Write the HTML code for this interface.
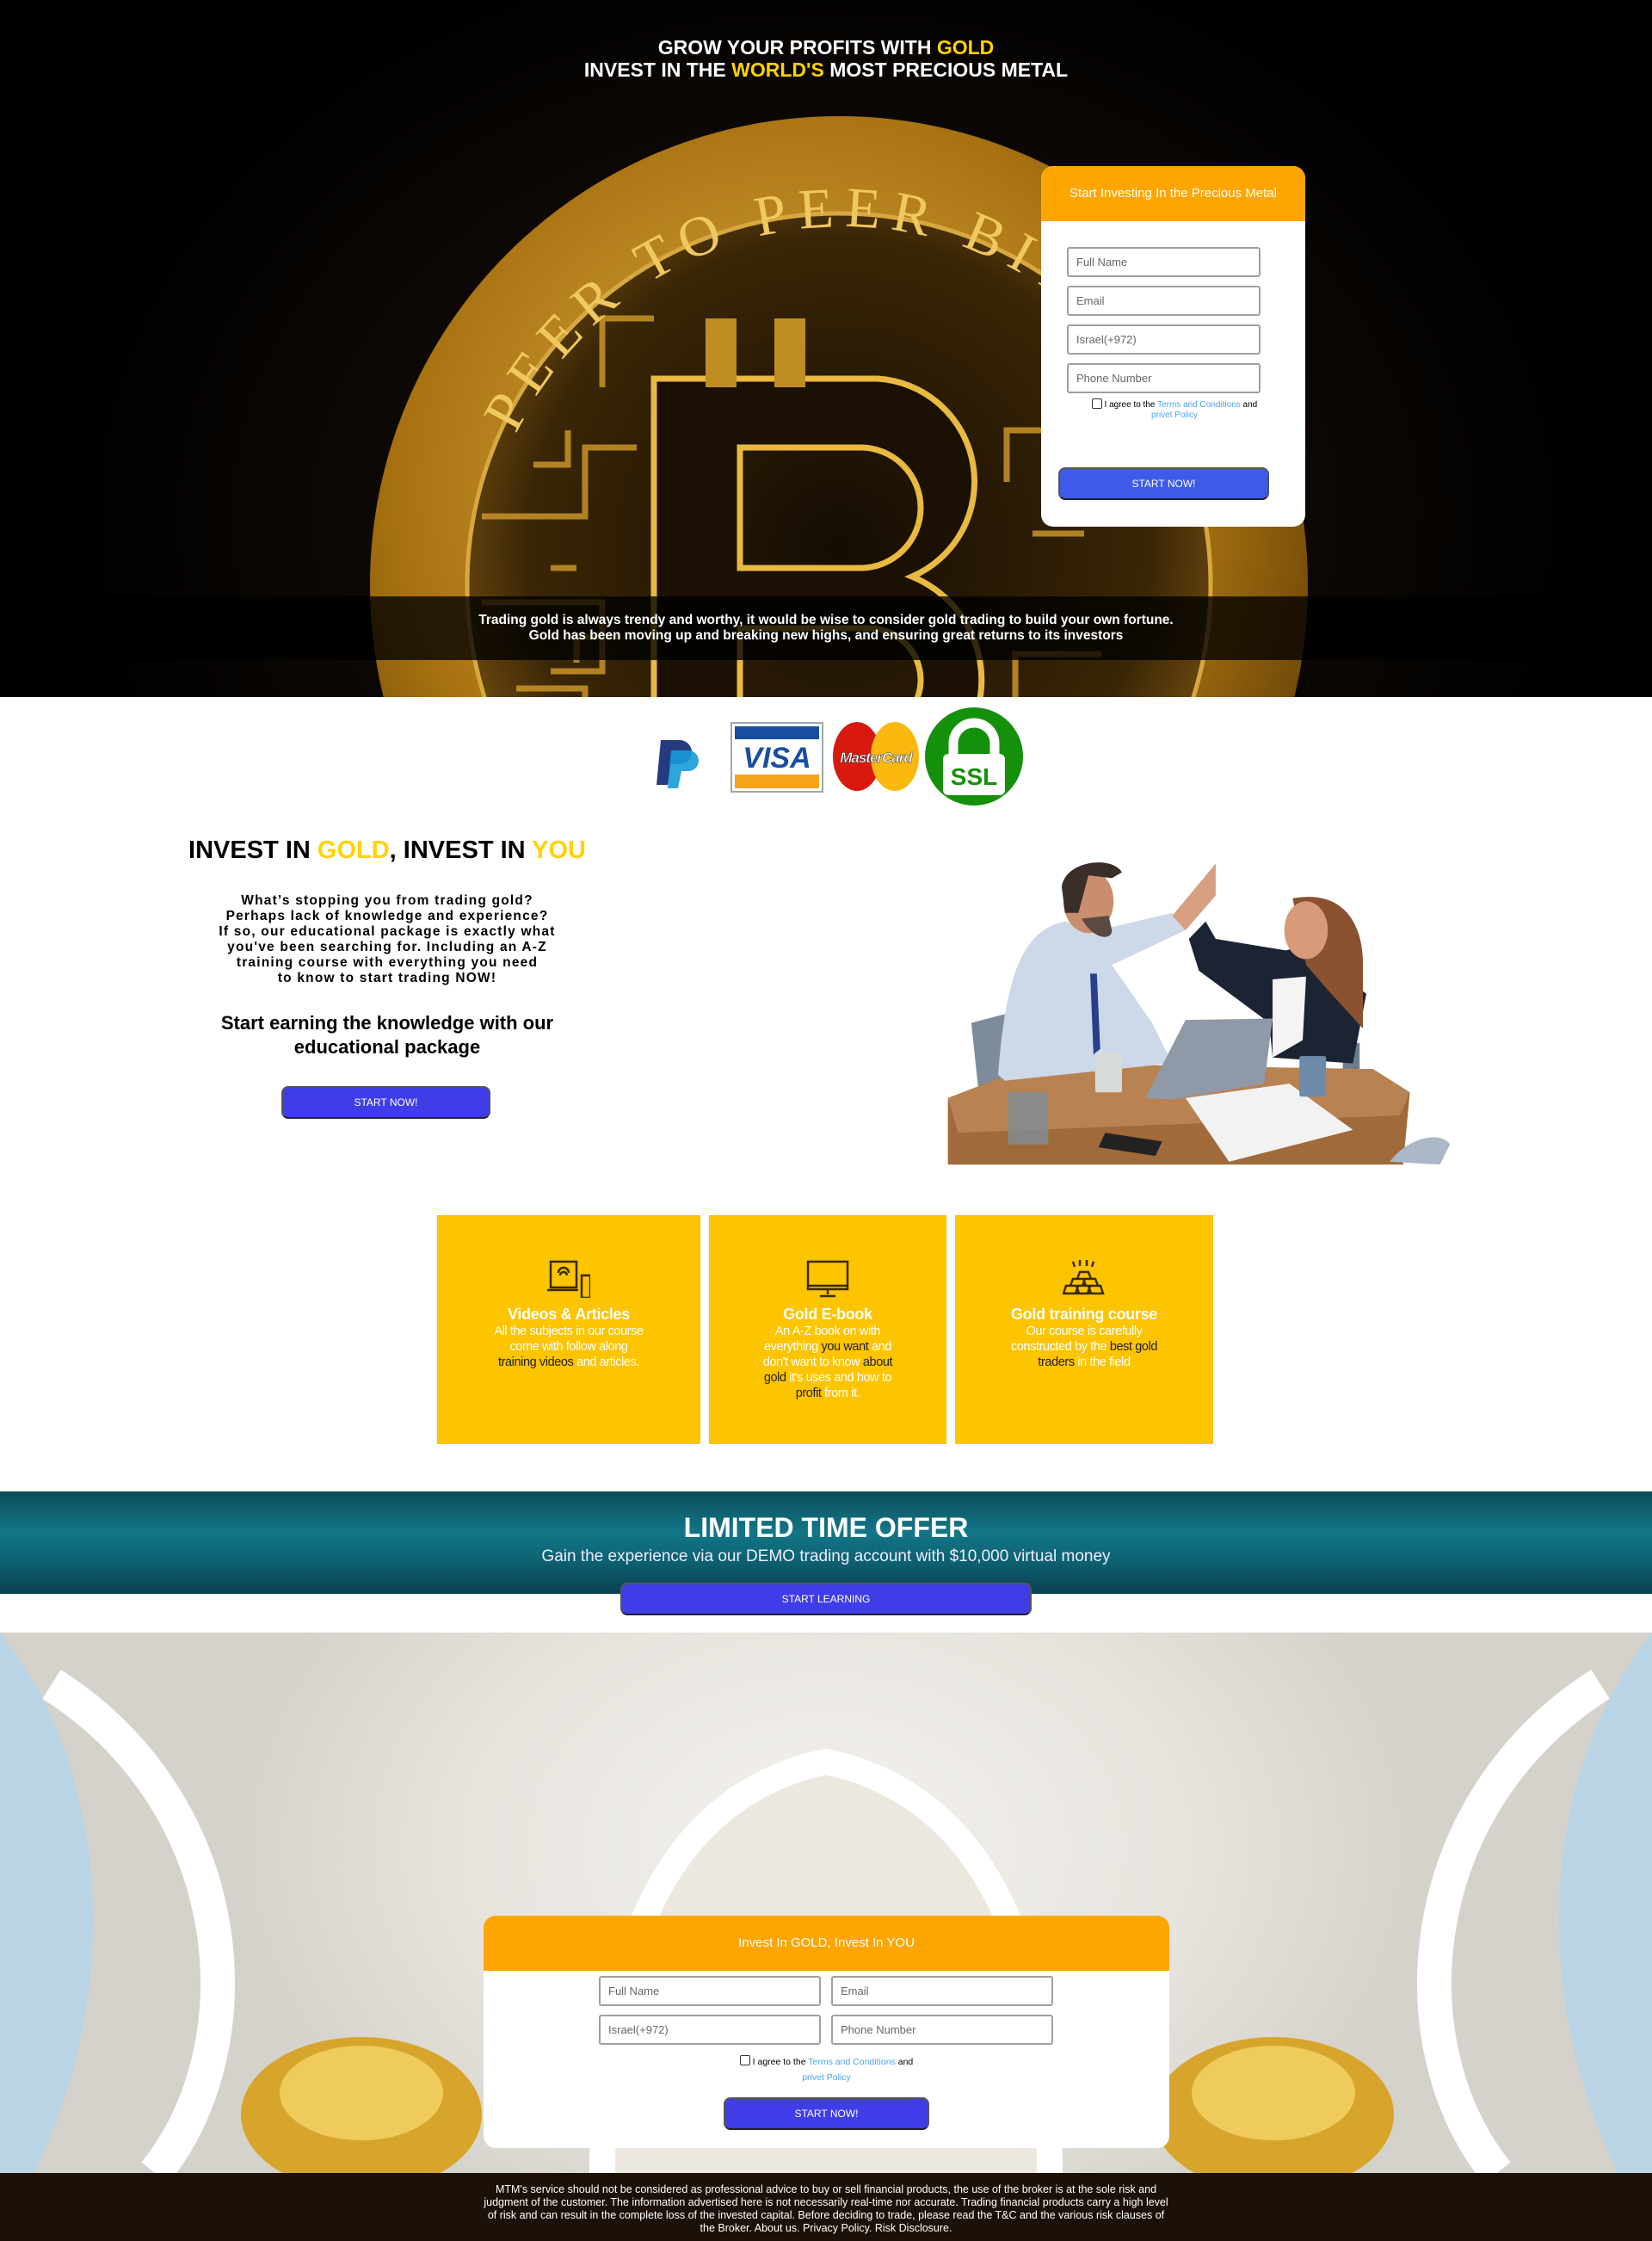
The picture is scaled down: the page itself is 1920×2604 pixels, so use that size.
<!DOCTYPE html>
<html><head><meta charset="utf-8"><style>
*{margin:0;padding:0;box-sizing:border-box}
body{width:1920px;height:2604px;position:relative;background:#fff;font-family:"Liberation Sans",Arial,sans-serif;overflow:hidden}
.a{position:absolute}
.hero{left:0;top:0;width:1920px;height:810px;background:radial-gradient(ellipse 900px 700px at 960px 600px,#2a1a05 0%,#0d0804 60%,#000 100%);overflow:hidden}
.title{left:0;top:42px;width:1920px;text-align:center;color:#fff;font-weight:bold;font-size:23px;line-height:26px}
.y{color:#ffd200}
.card{background:#fff;border-radius:14px;overflow:hidden}
.card .hd{background:#ffa500;color:#fff;text-align:center}
.inp{position:absolute;border:2px solid #a0a0a0;border-radius:3px;background:#fff;color:#666;font-size:13px;padding-left:9px;display:flex;align-items:center}
.btn{position:absolute;background:#3f3de8;border:2px solid #555;border-bottom-color:#222;border-radius:8px;color:#fff;font-size:12px;display:flex;align-items:center;justify-content:center}
.lnk{color:#4aa3ff}
.box{position:absolute;top:1412px;height:266px;background:#fdc400;text-align:center;color:#fff}
.box h3{font-size:18px;margin-top:4px;letter-spacing:-0.3px}
.box p{font-size:14.5px;line-height:18px;padding:0 6px;letter-spacing:-0.4px}
.box svg{margin-top:52px}
.k{color:#222}
</style></head><body>

<div class="a hero">
<svg class="a" style="left:0;top:0" width="1920" height="810">
<defs>
<radialGradient id="cg" cx="0.45" cy="0.4" r="0.7"><stop offset="0" stop-color="#e0b04a"/><stop offset="0.6" stop-color="#a87210"/><stop offset="1" stop-color="#4a2e04"/></radialGradient>
<radialGradient id="ci" cx="0.5" cy="0.45" r="0.6"><stop offset="0" stop-color="#140c03"/><stop offset="0.7" stop-color="#3a2606"/><stop offset="1" stop-color="#8a5e14"/></radialGradient>
<path id="arc" d="M560 680 A420 420 0 0 1 1290 400"/>
</defs>
<circle cx="975" cy="680" r="545" fill="url(#cg)"/>
<circle cx="975" cy="680" r="430" fill="url(#ci)"/>
<circle cx="975" cy="680" r="432" fill="none" stroke="#d8a840" stroke-width="5"/>
<g fill="none" stroke="#c99428" stroke-width="7" opacity=".85">
<path d="M560 600 h120 v-80 h60 M560 700 h140 v80 h-60 M600 800 h80 v60 M700 450 v-80 h60"/>
<path d="M1250 500 h-80 v60 M1260 620 h-60 M1280 760 h-100 v80"/>
<path d="M620 540 h40 v-40 M640 660 h30 M720 740 h-50 v30"/>
</g>
<path d="M760 440 h260 a120 120 0 0 1 40 230 a130 130 0 0 1 -40 250 h-260 z M860 520 v140 h140 a70 70 0 0 0 0 -140 z M860 730 v120 h150 a60 60 0 0 0 0 -120 z" fill="#1a1004" fill-rule="evenodd" stroke="#e9b940" stroke-width="7"/>
<rect x="820" y="370" width="36" height="80" fill="#c08d22"/><rect x="900" y="370" width="36" height="80" fill="#c08d22"/>
<text font-family="Liberation Serif" font-size="66" fill="#f0c860" letter-spacing="12"><textPath href="#arc" startOffset="18%">PEER TO PEER  BITCOIN</textPath></text>
</svg>
<div class="a title">GROW YOUR PROFITS WITH <span class="y">GOLD</span><br>INVEST IN THE <span class="y">WORLD'S</span> MOST PRECIOUS METAL</div>
<div class="a" style="left:0;top:693px;width:1920px;height:74px;background:rgba(0,0,0,.78);color:#fff;font-weight:bold;font-size:15.5px;line-height:18px;text-align:center;padding-top:19px">Trading gold is always trendy and worthy, it would be wise to consider gold trading to build your own fortune.<br>Gold has been moving up and breaking new highs, and ensuring great returns to its investors</div>
</div>

<div class="a card" style="left:1210px;top:193px;width:307px;height:419px">
<div class="hd" style="height:64px;line-height:64px;font-size:15px">Start Investing In the Precious Metal</div>
<div class="inp" style="left:30px;top:94px;width:225px;height:35px">Full Name</div>
<div class="inp" style="left:30px;top:139px;width:225px;height:35px">Email</div>
<div class="inp" style="left:30px;top:184px;width:225px;height:35px">Israel(+972)</div>
<div class="inp" style="left:30px;top:229px;width:225px;height:35px">Phone Number</div>
<div class="a" style="left:40px;top:270px;width:230px;text-align:center;font-size:10px;line-height:12px"><span style="display:inline-block;width:12px;height:12px;border:1px solid #333;border-radius:2px;vertical-align:-2px"></span> I agree to the <span class="lnk">Terms and Conditions</span> and<br><span class="lnk">privet Policy</span></div>
<div class="btn" style="left:20px;top:350px;width:245px;height:38px;background:#3d5ae8">START NOW!</div>
</div>

<svg class="a" style="left:756px;top:820px" width="440" height="118">
<path d="M12 40 h22 a14 14 0 0 1 0 28 h-10 l-4 24 h-13 z" fill="#253b80"/>
<path d="M24 52 h20 a12 12 0 0 1 0 24 h-8 l-4 20 h-12 z" fill="#179bd7" opacity=".9"/>
<rect x="94" y="20" width="106" height="80" fill="#fff" stroke="#9aa" stroke-width="2"/>
<rect x="98" y="24" width="98" height="15" fill="#1a4ea0"/>
<rect x="98" y="80" width="98" height="16" fill="#f7a21b"/>
<text x="147" y="72" text-anchor="middle" font-family="Liberation Sans" font-weight="bold" font-style="italic" font-size="34" fill="#1a4ea0">VISA</text>
<ellipse cx="240" cy="59" rx="28" ry="40" fill="#d8190f"/>
<ellipse cx="284" cy="59" rx="28" ry="40" fill="#fbb80f"/>
<text x="262" y="66" text-anchor="middle" font-family="Liberation Sans" font-weight="bold" font-style="italic" font-size="17" letter-spacing="-1" fill="#fff" stroke="#333" stroke-width=".5">MasterCard</text>
<ellipse cx="376" cy="59" rx="57" ry="57" fill="#14900a"/>
<path d="M352 58 v-14 a24 24 0 0 1 48 0 v14" fill="none" stroke="#fff" stroke-width="11"/>
<rect x="340" y="56" width="72" height="48" rx="6" fill="#fff"/>
<text x="376" y="92" text-anchor="middle" font-family="Liberation Sans" font-weight="bold" font-size="28" fill="#14900a">SSL</text>
</svg>

<div class="a" style="left:190px;top:972px;width:520px;text-align:center;font-weight:bold;font-size:29px">INVEST IN <span class="y">GOLD</span>, INVEST IN <span class="y">YOU</span></div>
<div class="a" style="left:190px;top:1038px;width:520px;text-align:center;font-weight:bold;font-size:15.5px;line-height:18px;letter-spacing:1.2px">What’s stopping you from trading gold?<br>Perhaps lack of knowledge and experience?<br>If so, our educational package is exactly what<br>you've been searching for. Including an A-Z<br>training course with everything you need<br>to know to start trading NOW!</div>
<div class="a" style="left:190px;top:1175px;width:520px;text-align:center;font-weight:bold;font-size:22px;line-height:28px">Start earning the knowledge with our<br>educational package</div>
<div class="btn" style="left:327px;top:1262px;width:243px;height:38px">START NOW!</div>

<svg class="a" style="left:1090px;top:980px" width="610" height="380" viewBox="0 0 1568 1130" preserveAspectRatio="none">
<path d="M100 620 l100 -30 v230 l-80 20 z" fill="#7d8c9a"/>
<path d="M1210 690 h50 v110 h-50z" fill="#6c7c8c"/>
<path d="M30 880 L300 760 L1300 780 L1410 860 L1390 1110 L30 1110 z" fill="#a06a3a"/>
<path d="M30 880 L300 760 L1300 780 L1410 860 L1380 940 L60 1000 z" fill="#b98252"/>
<path d="M180 800 C200 500 240 300 380 270 L480 300 L700 240 L740 300 L520 420 L640 620 L700 760 L200 820 z" fill="#cdd8e8"/>
<path d="M455 450 l20 0 l10 260 l-20 20 z" fill="#2a3f8a"/>
<ellipse cx="450" cy="200" rx="75" ry="110" fill="#c98e6e"/>
<path d="M370 150 C380 60 520 40 550 100 L520 120 L450 110 L420 240 L380 240z" fill="#3a2e28"/>
<path d="M430 260 C460 330 520 340 520 300 L510 250z" fill="#5a4a40"/>
<path d="M700 250 L830 70 L830 180 L740 300z" fill="#d7a083"/>
<path d="M750 330 L800 270 L830 330 L1040 370 L1100 350 L1280 520 L1240 760 L1000 740 L990 620 L780 440 z" fill="#1c2434"/>
<path d="M1000 470 L1100 460 L1090 680 L1000 740z" fill="#f4f4f4"/>
<path d="M1060 190 C1200 160 1270 260 1270 420 L1270 640 L1160 500 L1100 420z" fill="#8a5230"/>
<ellipse cx="1100" cy="300" rx="65" ry="100" fill="#d89a78"/>
<path d="M620 880 L740 610 L1000 605 L975 830 L700 885z" fill="#8f99a8"/>
<path d="M740 880 L1050 830 L1240 990 L870 1100 z" fill="#f2f2f2"/>
<rect x="470" y="720" width="80" height="140" rx="6" fill="#d8dcd8"/>
<rect x="1080" y="735" width="80" height="140" rx="6" fill="#6d8aa8"/>
<rect x="210" y="860" width="120" height="180" fill="#7f8f99" opacity=".8"/>
<path d="M500 1000 l170 30 l-20 50 l-170 -30z" fill="#222"/>
<path d="M1350 1100 C1400 1020 1500 990 1530 1040 L1500 1110z" fill="#aab8c8"/>
</svg>

<div class="box" style="left:508px;width:306px">
<svg width="50" height="44" viewBox="0 0 50 44" fill="none" stroke="#3a2a00" stroke-width="2.5"><rect x="4" y="2" width="30" height="30"/><path d="M0 35 h36 M40 18 h10 v26 h-10z"/><path d="M13 15 a6 6 0 0 1 12 0 M15 18 a4 4 0 0 1 8 0"/></svg>
<h3>Videos &amp; Articles</h3>
<p>All the subjects in our course<br>come with follow along<br><span class="k">training videos</span> and articles.</p></div>
<div class="box" style="left:824px;width:276px">
<svg width="50" height="44" viewBox="0 0 50 44" fill="none" stroke="#3a2a00" stroke-width="2.5"><rect x="2" y="2" width="46" height="32"/><path d="M2 30 h46 M25 34 v6 M16 42 h18"/></svg>
<h3>Gold E-book</h3>
<p>An A-Z book on with<br>everything <span class="k">you want</span> and<br>don't want to know <span class="k">about</span><br><span class="k">gold</span> it's uses and how to<br><span class="k">profit</span> from it.</p></div>
<div class="box" style="left:1110px;width:300px">
<svg width="50" height="44" viewBox="0 0 50 44" fill="none" stroke="#3a2a00" stroke-width="2.5"><path d="M20 14 h10 l3 8 h-16z M12 22 h12 l3 8 h-18z M26 22 h12 l3 8 h-18z M4 30 h12 l3 9 h-18z M18 30 h12 l3 9 h-18z M32 30 h12 l3 9 h-18z M12 2 l2 6 M20 0 v7 M28 0 v7 M36 2 l-2 6"/></svg>
<h3>Gold training course</h3>
<p>Our course is carefully<br>constructed by the <span class="k">best gold</span><br><span class="k">traders</span> in the field</p></div>

<div class="a" style="left:0;top:1733px;width:1920px;height:119px;background:linear-gradient(180deg,#0d4c5a 0%,#127787 40%,#0d5f70 70%,#0a4050 100%)"></div>
<div class="a" style="left:0;top:1757px;width:1920px;text-align:center;color:#fff;font-weight:bold;font-size:32px">LIMITED TIME OFFER</div>
<div class="a" style="left:0;top:1798px;width:1920px;text-align:center;color:#eef;font-size:19px">Gain the experience via our DEMO trading account with $10,000 virtual money</div>
<div class="btn" style="left:721px;top:1839px;width:478px;height:38px;background:#3f3de8">START LEARNING</div>

<div class="a" style="left:0;top:1897px;width:1920px;height:628px;background:radial-gradient(ellipse 700px 500px at 960px 250px,#f4f2ee 0%,#e7e4de 60%,#d5d2cc 100%);overflow:hidden">
<svg width="1920" height="628">
<path d="M0 0 C120 150 150 400 40 628 L0 628z" fill="#b9d4e4"/>
<path d="M1920 0 C1800 150 1770 400 1880 628 L1920 628z" fill="#b9d4e4"/>
<path d="M60 60 C280 200 300 480 180 628" fill="none" stroke="#fff" stroke-width="40"/>
<path d="M1860 60 C1640 200 1620 480 1740 628" fill="none" stroke="#fff" stroke-width="40"/>
<path d="M700 628 C700 300 820 180 960 150 C1100 180 1220 300 1220 628" fill="#ece8df" stroke="#fff" stroke-width="30"/>
<ellipse cx="420" cy="560" rx="140" ry="90" fill="#d7a52c"/>
<ellipse cx="1480" cy="560" rx="140" ry="90" fill="#d7a52c"/>
<ellipse cx="420" cy="535" rx="95" ry="55" fill="#efcb5c"/>
<ellipse cx="1480" cy="535" rx="95" ry="55" fill="#efcb5c"/>
</svg>
</div>

<div class="a card" style="left:562px;top:2226px;width:797px;height:270px">
<div class="hd" style="height:64px;line-height:64px;font-size:15px">Invest In GOLD, Invest In YOU</div>
<div class="inp" style="left:134px;top:70px;width:258px;height:35px">Full Name</div>
<div class="inp" style="left:404px;top:70px;width:258px;height:35px">Email</div>
<div class="inp" style="left:134px;top:115px;width:258px;height:35px">Israel(+972)</div>
<div class="inp" style="left:404px;top:115px;width:258px;height:35px">Phone Number</div>
<div class="a" style="left:0;top:161px;width:797px;text-align:center;font-size:10.5px;line-height:18px"><span style="display:inline-block;width:12px;height:12px;border:1px solid #333;border-radius:2px;vertical-align:-1px"></span> I agree to the <span class="lnk">Terms and Conditions</span> and<br><span class="lnk">privet Policy</span></div>
<div class="btn" style="left:279px;top:211px;width:239px;height:38px">START NOW!</div>
</div>

<div class="a" style="left:0;top:2525px;width:1920px;height:79px;background:#1c1108;color:#fff;text-align:center;font-size:12.5px;line-height:15px;padding-top:12px">MTM's service should not be considered as professional advice to buy or sell financial products, the use of the broker is at the sole risk and<br>judgment of the customer. The information advertised here is not necessarily real-time nor accurate. Trading financial products carry a high level<br>of risk and can result in the complete loss of the invested capital. Before deciding to trade, please read the T&amp;C and the various risk clauses of<br>the Broker. About us. Privacy Policy. Risk Disclosure.</div>
</body></html>
